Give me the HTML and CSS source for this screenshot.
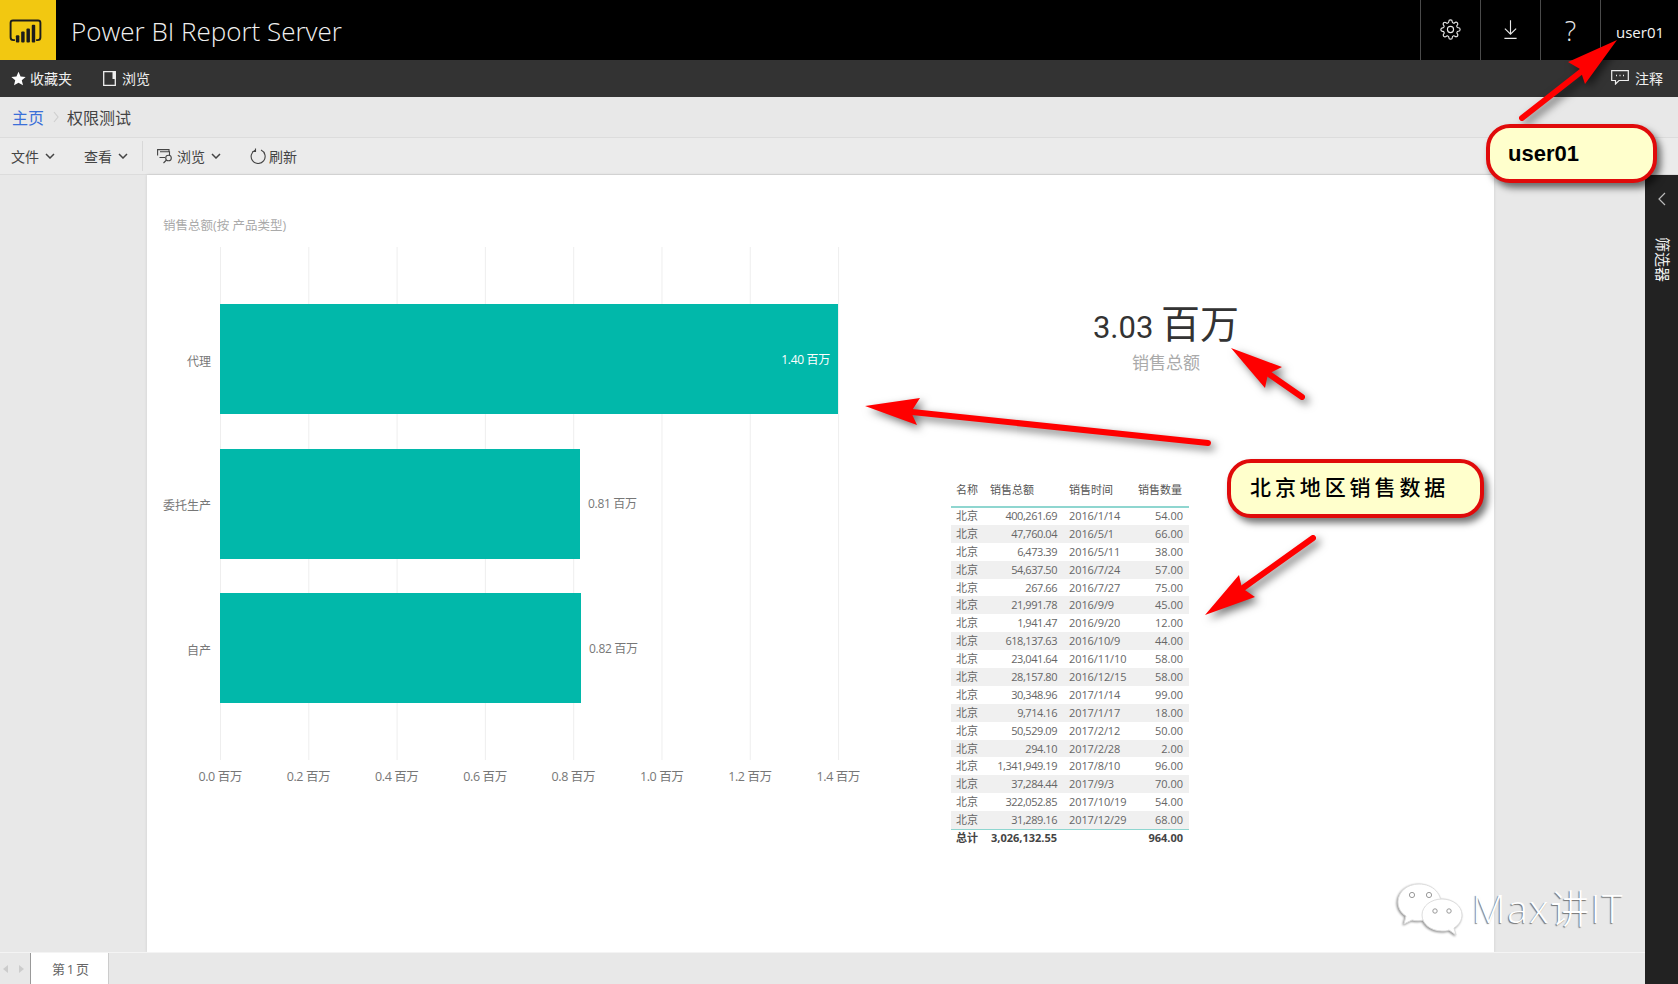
FILE: index.html
```html
<!DOCTYPE html>
<html lang="zh-CN">
<head>
<meta charset="utf-8">
<title>Power BI Report Server</title>
<link rel="stylesheet" href="styles.css">
</head>
<body>
<div class="app">
  <header class="topbar">
    <div class="logo">
      <svg class="logo-icon" viewBox="0 0 34 26" aria-hidden="true">
        <path class="logo-outline" d="M6 22H4.500Q1.500 22 1.500 19V4Q1.500 1.500 4 1.500H30Q32.500 1.500 32.500 4V19Q32.500 22 29.500 22H28"/>
        <rect class="logo-bar" x="7" y="17" width="3.600" height="7.500" rx="1"/>
        <rect class="logo-bar" x="12.500" y="13" width="3.600" height="11.500" rx="1"/>
        <rect class="logo-bar" x="18" y="10" width="3.600" height="14.500" rx="1"/>
        <rect class="logo-bar" x="23.500" y="6" width="3.600" height="18.500" rx="1"/>
      </svg>
    </div>
    <div class="brand">Power BI Report Server</div>
    <div class="top-actions">
      <div class="top-btn">
        <svg class="icon-gear" viewBox="0 0 24 24" aria-hidden="true"><circle cx="12" cy="12" r="3.500"/><path d="M19.400 15a1.650 1.650 0 0 0 .33 1.820l.06.06a2 2 0 0 1 0 2.830 2 2 0 0 1-2.830 0l-.06-.06a1.650 1.650 0 0 0-1.820-.33 1.650 1.650 0 0 0-1 1.510V21a2 2 0 0 1-2 2 2 2 0 0 1-2-2v-.09A1.650 1.650 0 0 0 9 19.400a1.650 1.650 0 0 0-1.820.33l-.06.06a2 2 0 0 1-2.830 0 2 2 0 0 1 0-2.830l.06-.06a1.650 1.650 0 0 0 .33-1.820 1.650 1.650 0 0 0-1.510-1H3a2 2 0 0 1-2-2 2 2 0 0 1 2-2h.09A1.650 1.650 0 0 0 4.600 9a1.650 1.650 0 0 0-.33-1.820l-.06-.06a2 2 0 0 1 0-2.830 2 2 0 0 1 2.830 0l.06.06a1.650 1.650 0 0 0 1.820.33H9a1.650 1.650 0 0 0 1-1.510V3a2 2 0 0 1 2-2 2 2 0 0 1 2 2v.09a1.650 1.650 0 0 0 1 1.510 1.650 1.650 0 0 0 1.820-.33l.06-.06a2 2 0 0 1 2.830 0 2 2 0 0 1 0 2.830l-.06.06a1.650 1.650 0 0 0-.33 1.820V9a1.650 1.650 0 0 0 1.510 1H21a2 2 0 0 1 2 2 2 2 0 0 1-2 2h-.09a1.650 1.650 0 0 0-1.510 1z"/></svg>
      </div>
      <div class="top-btn">
        <svg class="icon-line" viewBox="0 0 16 22" aria-hidden="true"><path d="M8 1V16M2 10L8 16L14 10M1.500 20.500H14.500"/></svg>
      </div>
      <div class="top-btn help">?</div>
      <div class="top-btn user">user01</div>
    </div>
  </header>

  <nav class="navbar">
    <div class="nav-item">
      <svg class="icon-star" viewBox="0 0 16 16" aria-hidden="true"><path d="M8 .8L10.200 5.800L15.600 6.300L11.500 9.900L12.800 15.200L8 12.400L3.200 15.200L4.500 9.900L.4 6.300L5.800 5.800Z"/></svg>
      <span>收藏夹</span>
    </div>
    <div class="nav-item nav-browse">
      <svg class="icon-doc" viewBox="0 0 13 15" aria-hidden="true"><path d="M.7.7H12.300V14.300H.7Z"/><rect x="9.500" y="1" width="3" height="7"/></svg>
      <span>浏览</span>
    </div>
    <div class="nav-item nav-right">
      <svg class="icon-comment" viewBox="0 0 18 15" aria-hidden="true"><path d="M.7.7H17.300V10.500H8L4.500 14V10.500H.7Z"/><path class="dots" d="M5 5.600H6M8.500 5.600H9.500M12 5.600H13"/></svg>
      <span>注释</span>
    </div>
  </nav>

  <div class="crumbs">
    <span class="crumb-link">主页</span>
    <svg class="crumb-sep" viewBox="0 0 6 12" aria-hidden="true"><path d="M1 1L5 6L1 11"/></svg>
    <span class="crumb-here">权限测试</span>
  </div>

  <div class="toolbar">
    <div class="tool tool-file">文件<svg class="chev" viewBox="0 0 10 6" aria-hidden="true"><path d="M1 1L5 5L9 1"/></svg></div>
    <div class="tool tool-view">查看<svg class="chev" viewBox="0 0 10 6" aria-hidden="true"><path d="M1 1L5 5L9 1"/></svg></div>
    <div class="tool-sep"></div>
    <div class="tool tool-browse">
      <svg class="icon-browse" viewBox="0 0 17 15" aria-hidden="true"><path d="M.6 6.500V.6H12V2.500M2.500 8.500H8M3 2.800H12.500V7"/><circle cx="11.500" cy="9" r="2.800"/><path d="M9.500 11L6.500 14"/></svg>
      浏览<svg class="chev" viewBox="0 0 10 6" aria-hidden="true"><path d="M1 1L5 5L9 1"/></svg>
    </div>
    <div class="tool tool-refresh">
      <svg class="icon-refresh" viewBox="0 0 16 16" aria-hidden="true"><path d="M5.500 2A7 7 0 1 0 11 2.100"/><path d="M5.500 .5V3.500H2.500"/></svg>
      刷新
    </div>
  </div>

  <div class="workspace">
    <div class="stage">
      <div class="canvas-row">
        <main class="page">
          <section class="chart">
            <h2 class="chart-title">销售总额(按 产品类型)</h2>
            <div class="plot">
              <div class="bar-row">
                <div class="cat">代理</div>
                <div class="bar inner" style="width:618px"><span class="val-in">1.40 百万</span></div>
              </div>
              <div class="bar-row">
                <div class="cat">委托生产</div>
                <div class="bar-line"><div class="bar" style="width:360px"></div><span class="val">0.81 百万</span></div>
              </div>
              <div class="bar-row">
                <div class="cat">自产</div>
                <div class="bar-line"><div class="bar" style="width:361px"></div><span class="val">0.82 百万</span></div>
              </div>
            </div>
            <div class="axis">
              <span>0.0 百万</span><span>0.2 百万</span><span>0.4 百万</span><span>0.6 百万</span><span>0.8 百万</span><span>1.0 百万</span><span>1.2 百万</span><span>1.4 百万</span>
            </div>
          </section>
          <section class="side">
            <div class="kpi">
              <div class="kpi-value">3.03 <span class="kpi-unit">百万</span></div>
              <div class="kpi-label">销售总额</div>
            </div>
            <table class="grid">
              <thead>
                <tr><th class="c-name">名称</th><th class="c-amt">销售总额</th><th class="c-date">销售时间</th><th class="c-qty">销售数量</th></tr>
              </thead>
              <tbody>
                <tr><td>北京</td><td class="num">400,261.69</td><td>2016/1/14</td><td class="num">54.00</td></tr>
                <tr><td>北京</td><td class="num">47,760.04</td><td>2016/5/1</td><td class="num">66.00</td></tr>
                <tr><td>北京</td><td class="num">6,473.39</td><td>2016/5/11</td><td class="num">38.00</td></tr>
                <tr><td>北京</td><td class="num">54,637.50</td><td>2016/7/24</td><td class="num">57.00</td></tr>
                <tr><td>北京</td><td class="num">267.66</td><td>2016/7/27</td><td class="num">75.00</td></tr>
                <tr><td>北京</td><td class="num">21,991.78</td><td>2016/9/9</td><td class="num">45.00</td></tr>
                <tr><td>北京</td><td class="num">1,941.47</td><td>2016/9/20</td><td class="num">12.00</td></tr>
                <tr><td>北京</td><td class="num">618,137.63</td><td>2016/10/9</td><td class="num">44.00</td></tr>
                <tr><td>北京</td><td class="num">23,041.64</td><td>2016/11/10</td><td class="num">58.00</td></tr>
                <tr><td>北京</td><td class="num">28,157.80</td><td>2016/12/15</td><td class="num">58.00</td></tr>
                <tr><td>北京</td><td class="num">30,348.96</td><td>2017/1/14</td><td class="num">99.00</td></tr>
                <tr><td>北京</td><td class="num">9,714.16</td><td>2017/1/17</td><td class="num">18.00</td></tr>
                <tr><td>北京</td><td class="num">50,529.09</td><td>2017/2/12</td><td class="num">50.00</td></tr>
                <tr><td>北京</td><td class="num">294.10</td><td>2017/2/28</td><td class="num">2.00</td></tr>
                <tr><td>北京</td><td class="num">1,341,949.19</td><td>2017/8/10</td><td class="num">96.00</td></tr>
                <tr><td>北京</td><td class="num">37,284.44</td><td>2017/9/3</td><td class="num">70.00</td></tr>
                <tr><td>北京</td><td class="num">322,052.85</td><td>2017/10/19</td><td class="num">54.00</td></tr>
                <tr><td>北京</td><td class="num">31,289.16</td><td>2017/12/29</td><td class="num">68.00</td></tr>
              </tbody>
              <tfoot>
                <tr><td>总计</td><td class="num">3,026,132.55</td><td></td><td class="num">964.00</td></tr>
              </tfoot>
            </table>
          </section>
        </main>
      </div>
      <div class="tabs">
        <div class="tab-arrows">
          <svg viewBox="0 0 6 8" aria-hidden="true"><path d="M5 0V8L0 4Z"/></svg>
          <svg viewBox="0 0 6 8" aria-hidden="true"><path d="M1 0V8L6 4Z"/></svg>
        </div>
        <div class="tab">第 1 页</div>
      </div>
    </div>
    <aside class="filters">
      <svg class="filters-chev" viewBox="0 0 8 14" aria-hidden="true"><path d="M7 1L1 7L7 13"/></svg>
      <div class="filters-label">筛选器</div>
    </aside>
  </div>

  <svg class="arrows" viewBox="0 0 1678 984" aria-hidden="true">
    <g class="arrow">
      <path class="shaft" d="M1522 118L1582 71"/>
      <path class="head" d="M1617 40L1568 62L1580 69L1585 84Z"/>
    </g>
    <g class="arrow">
      <path class="shaft" d="M1302 397L1266 372"/>
      <path class="head" d="M1231 348L1282 367L1268 374L1265 388Z"/>
    </g>
    <g class="arrow">
      <path class="shaft" d="M1208 443L912 412"/>
      <path class="head" d="M865 406L920 398L911 412L917 425Z"/>
    </g>
    <g class="arrow">
      <path class="shaft" d="M1313 538L1243 588"/>
      <path class="head" d="M1205 615L1239 575L1242 588L1255 597Z"/>
    </g>
  </svg>
  <div class="callout callout-user">user01</div>
  <div class="callout callout-data">北京地区销售数据</div>

  <div class="watermark">
    <svg class="wechat" viewBox="0 0 66 54" aria-hidden="true">
      <path class="bubble" d="M22 1C10 1 1 9 1 19C1 25 4 30 9 33L7 41L15 37C19 38 23 38 26 37C31 40 40 40 44 25C46 11 36 1 22 1Z"/>
      <circle class="eye" cx="15" cy="12" r="2.600"/><circle class="eye" cx="32" cy="12" r="2.600"/>
      <path class="bubble" d="M45 16C34 16 25 23 25 32C25 41 34 48 45 48C48 48 50 48 52 47L59 52L57 45C62 42 65 37 65 32C65 23 56 16 45 16Z"/>
      <circle class="eye" cx="38" cy="28" r="2.200"/><circle class="eye" cx="52" cy="28" r="2.200"/>
    </svg>
    <span class="wm-text">Max讲IT</span>
  </div>
</div>
</body>
</html>
```

FILE: styles.css
```css
* { box-sizing: border-box; }
html, body { margin: 0; padding: 0; }
body {
  font-family: "Open Sans", "Noto Sans CJK SC", sans-serif;
  background: #e8e8e8;
  color: #444;
  overflow: hidden;
}
.app { position: relative; width: 1678px; height: 984px; overflow: hidden; }

/* top bar */
.topbar { display: flex; align-items: stretch; height: 60px; background: #000; color: #fff; }
.logo { width: 56px; background: #f2c811; display: flex; align-items: center; justify-content: flex-start; padding-left: 9px; }
.logo-icon { width: 33px; height: 25px; margin-top: 3px; }
.logo-outline { fill: none; stroke: #1c1c1c; stroke-width: 2; }
.logo-bar { fill: #1c1c1c; }
.brand { margin-left: 15px; font-size: 26px; font-weight: 300; line-height: 63px; color: #f0f0f0; white-space: nowrap; }
.top-actions { margin-left: auto; display: flex; }
.top-btn { width: 60px; border-left: 1px solid #4a4a4a; display: flex; align-items: center; justify-content: center; }
.help { font-size: 27px; font-weight: 300; color: #e8e8e8; }
.user { width: 78px; font-size: 15px; color: #f4f4f4; padding-top: 3px; justify-content: flex-start; padding-left: 15px; }
.icon-gear { width: 21px; height: 21px; fill: none; stroke: #e8e8e8; stroke-width: 1.300; margin-top: -2px; }
.icon-line { width: 15px; height: 21px; fill: none; stroke: #e8e8e8; stroke-width: 1.200; margin-top: -1px; }

/* nav */
.navbar { display: flex; align-items: center; height: 37px; background: #333; color: #f0f0f0; font-size: 14px; padding: 0 0 2px 11px; gap: 31px; }
.nav-item { display: flex; align-items: center; gap: 4px; }
.nav-browse { gap: 6px; }
.nav-right { margin-left: auto; margin-right: 15px; gap: 6px; }
.icon-star { width: 15px; height: 15px; fill: #fff; margin-top: 1px; }
.icon-doc { width: 13px; height: 15px; fill: none; stroke: #eee; stroke-width: 1.300; margin-top: 1px; }
.icon-doc rect { fill: #eee; stroke: none; }
.icon-comment { width: 18px; height: 15px; fill: none; stroke: #eee; stroke-width: 1.200; }
.dots { stroke-width: 1.500; }

/* breadcrumb */
.crumbs { display: flex; align-items: center; height: 41px; padding: 0 0 1px 12px; font-size: 16px; background: #e8e8e8; border-bottom: 1px solid #dcdcdc; }
.crumb-link { color: #3a6fd8; }
.crumb-sep { width: 6px; height: 12px; margin: 0 8px 0 9px; fill: none; stroke: #cfcfcf; stroke-width: 1.200; }
.crumb-here { color: #444; }

/* toolbar */
.toolbar { display: flex; align-items: center; height: 37px; background: #ebebeb; border-bottom: 1px solid #dcdcdc; padding-left: 11px; font-size: 14px; color: #444; }
.tool { display: flex; align-items: center; }
.chev { width: 10px; height: 6px; margin-left: 6px; fill: none; stroke: #444; stroke-width: 1.500; }
.tool-file { width: 73px; }
.tool-view { width: 58px; }
.tool-sep { width: 1px; height: 30px; background: #d8d8d8; margin-right: 14px; }
.tool-browse { width: 93px; }
.icon-browse { width: 17px; height: 15px; margin-right: 3px; fill: none; stroke: #444; stroke-width: 1.100; }
.icon-refresh { width: 16px; height: 16px; margin-right: 3px; fill: none; stroke: #444; stroke-width: 1.100; }

/* workspace */
.workspace { display: flex; height: 809px; }
.stage { flex: 1; display: flex; flex-direction: column; min-width: 0; }
.canvas-row { flex: 1; padding: 0 151px 0 147px; min-height: 0; }
.page { display: flex; height: 777px; background: #fff; box-shadow: 0 0 3px rgba(0, 0, 0, .12); }

/* chart */
.chart { width: 804px; padding: 41px 0 0 16px; flex: none; }
.chart-title { margin: 0; font-size: 12.500px; line-height: 20px; font-weight: 400; color: #aaa; white-space: nowrap; }
.plot {
  margin-top: 11px;
  width: 678px;
  height: 513px;
  padding-top: 57px;
  display: flex;
  flex-direction: column;
  gap: 34.500px;
  background-image: linear-gradient(to right, #eee 0, #eee 1px, transparent 1px);
  background-size: 88.300px 100%;
  background-position: 57px 0;
}
.bar-row { display: grid; grid-template-columns: 57px 1fr; align-items: center; height: 110px; }
.cat { font-size: 12px; color: #777; text-align: right; padding: 3px 9px 0 0; white-space: nowrap; }
.bar { height: 110px; background: #01b8aa; }
.bar.inner { display: flex; align-items: center; justify-content: flex-end; padding-right: 8px; }
.bar-line { display: flex; align-items: center; gap: 8px; }
.val, .val-in { font-size: 12px; color: #777; letter-spacing: -.3px; white-space: nowrap; }
.val { padding-bottom: 1px; }
.val-in { color: #fff; }
.axis { display: flex; margin: 7px 0 0 13px; }
.axis span { width: 88.300px; flex: none; text-align: center; font-size: 12.500px; line-height: 20px; color: #777; letter-spacing: -.4px; white-space: nowrap; }

/* right side */
.side { width: 430px; padding-top: 130px; flex: none; display: flex; flex-direction: column; align-items: center; }
.kpi { text-align: center; }
.kpi-value { font-size: 31px; line-height: 45px; color: #333; white-space: nowrap; font-family: "Roboto", "Noto Sans CJK SC", sans-serif; }
.kpi-unit { font-size: 39px; font-weight: 400; line-height: 40px; }
.kpi-label { font-size: 17px; line-height: 26px; color: #aaa; }
.grid { align-self: flex-start; margin-top: 101px; width: 238px; table-layout: fixed; border-collapse: collapse; font-size: 11px; color: #666; }
.grid th { font-weight: 400; color: #555; height: 30px; text-align: left; padding: 0 5px 5px; border-bottom: 2px solid #8fd6d0; white-space: nowrap; }
.grid td { height: 17.900px; padding: 0 5px; line-height: 14px; white-space: nowrap; }
.grid .c-name { width: 34px; }
.grid .c-amt { width: 78px; }
.grid .c-date { width: 64px; }
.grid .c-date, .grid td:nth-child(3) { padding-left: 6px; }
.grid .c-qty, .grid .num { text-align: right; padding-right: 6px; }
.grid .c-qty { padding-right: 7px; }
.grid tbody td:nth-child(2) { letter-spacing: -.45px; }
.grid td:nth-child(3) { letter-spacing: -.1px; }
.grid tbody tr:nth-child(even) { background: #f0f0f0; }
.grid tfoot tr { border-top: 1px solid #8fd6d0; }
.grid tfoot td { font-weight: 700; color: #444; height: 18px; }

/* tabs */
.tabs { display: flex; height: 32px; border-top: 1px solid #f4f4f4; background: #e8e8e8; }
.tab-arrows { width: 31px; display: flex; align-items: center; gap: 9px; padding-left: 3px; border-right: 1px solid #999; }
.tab-arrows svg { width: 6px; height: 8px; fill: #ccc; }
.tab { width: 78px; background: #fff; border-right: 1px solid #ccc; font-size: 13px; word-spacing: -1.500px; color: #666; display: flex; align-items: center; justify-content: center; padding-left: 2px; }

/* filter panel */
.filters { width: 33px; background: #222; color: #f0f0f0; display: flex; flex-direction: column; align-items: center; padding-top: 17px; }
.filters-chev { width: 8px; height: 14px; fill: none; stroke: #bbb; stroke-width: 1.200; margin-left: 1px; }
.filters-label { writing-mode: vertical-rl; text-orientation: sideways; font-size: 15px; line-height: 20px; margin: 31px 0 0 3px; white-space: nowrap; }

/* annotations */
.arrows { position: absolute; left: 0; top: 0; width: 1678px; height: 984px; pointer-events: none; }
.arrow { filter: drop-shadow(4px 4px 4px rgba(0, 0, 0, .55)); }
.shaft { stroke: #f00; stroke-width: 6; stroke-linecap: round; fill: none; }
.head { fill: #f00; }
.callout {
  position: absolute;
  background: #ffffcc;
  border: 4px solid #e00a0a;
  border-radius: 24px;
  color: #000;
  box-shadow: 4px 5px 7px rgba(0, 0, 0, .55);
  display: flex;
  align-items: center;
}
.callout-user { left: 1486px; top: 124px; width: 171px; height: 59px; padding-left: 18px; font: 700 22px "Liberation Sans", sans-serif; }
.callout-data { left: 1227px; top: 459px; width: 257px; height: 59px; padding: 0 0 6px 19px; font-size: 21px; font-weight: 500; letter-spacing: 3.900px; white-space: nowrap; font-family: "Noto Sans CJK SC", sans-serif; }

/* watermark */
.watermark { position: absolute; left: 1397px; top: 883px; display: flex; align-items: center; gap: 9px; }
.wechat { width: 66px; height: 54px; filter: drop-shadow(-1px 1px 1px rgba(0, 0, 0, .45)); }
.bubble { fill: #fff; stroke: #ddd; stroke-width: 1; }
.eye { fill: #fff; stroke: #999; stroke-width: 1; }
.wm-text { font-size: 39px; font-weight: 300; color: #fff; letter-spacing: 1.500px; margin-top: -8px; text-shadow: -1px 1px 1px rgba(0, 0, 0, .5); white-space: nowrap; }
```
